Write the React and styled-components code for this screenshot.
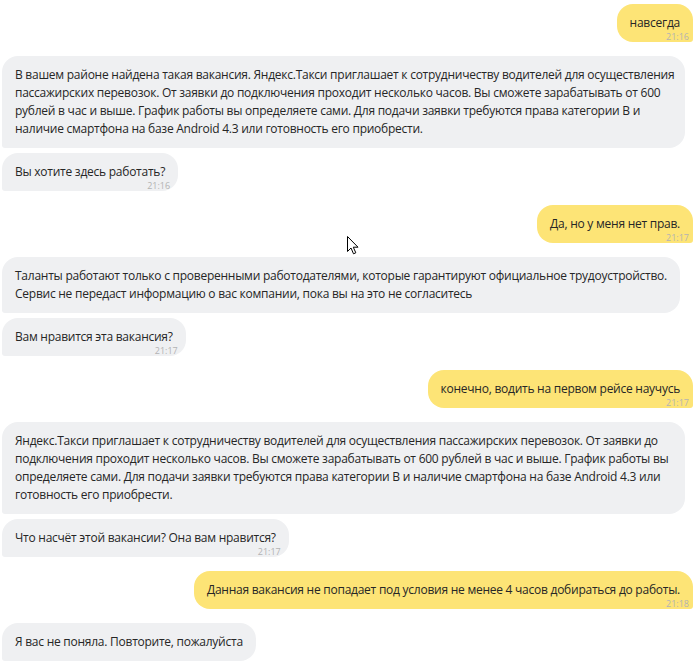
import styled, { createGlobalStyle } from "styled-components";

const GlobalStyle = createGlobalStyle`
  html, body {
    margin: 0;
    padding: 0;
    background: #ffffff;
  }
  body {
    font-family: "Open Sans", "Noto Sans", Arial, sans-serif;
    color: #262626;
  }
`;

const messages = [
  { from: "me", items: [{ text: ["навсегда"], time: "21:16" }] },
  {
    from: "bot",
    items: [
      {
        text: [
          "В вашем районе найдена такая вакансия. Яндекс.Такси приглашает к сотрудничеству водителей для осуществления",
          "пассажирских перевозок. От заявки до подключения проходит несколько часов. Вы сможете зарабатывать от 600",
          "рублей в час и выше. График работы вы определяете сами. Для подачи заявки требуются права категории В и",
          "наличие смартфона на базе Android 4.3 или готовность его приобрести.",
        ],
        wide: true,
      },
      { text: ["Вы хотите здесь работать?"], time: "21:16" },
    ],
  },
  { from: "me", items: [{ text: ["Да, но у меня нет прав."], time: "21:17" }] },
  {
    from: "bot",
    items: [
      {
        text: [
          "Таланты работают только с проверенными работодателями, которые гарантируют официальное трудоустройство.",
          "Сервис не передаст информацию о вас компании, пока вы на это не согласитесь",
        ],
      },
      { text: ["Вам нравится эта вакансия?"], time: "21:17" },
    ],
  },
  { from: "me", items: [{ text: ["конечно, водить на первом рейсе научусь"], time: "21:17" }] },
  {
    from: "bot",
    items: [
      {
        text: [
          "Яндекс.Такси приглашает к сотрудничеству водителей для осуществления пассажирских перевозок. От заявки до",
          "подключения проходит несколько часов. Вы сможете зарабатывать от 600 рублей в час и выше. График работы вы",
          "определяете сами. Для подачи заявки требуются права категории В и наличие смартфона на базе Android 4.3 или",
          "готовность его приобрести.",
        ],
        wide: true,
      },
      { text: ["Что насчёт этой вакансии? Она вам нравится?"], time: "21:17" },
    ],
  },
  {
    from: "me",
    items: [
      { text: ["Данная вакансия не попадает под условия не менее 4 часов добираться до работы."], time: "21:18" },
    ],
  },
  { from: "bot", items: [{ text: ["Я вас не поняла. Повторите, пожалуйста"] }] },
];

const App = () => (
  <>
    <GlobalStyle />
    <Chat>
      {messages.map((group, gi) => (
        <Group key={gi} $mine={group.from === "me"}>
          {group.items.map((msg, mi) => (
            <Bubble key={mi} $mine={group.from === "me"} $wide={msg.wide}>
              {msg.text.map((line, li) => (
                <Line key={li}>{line}</Line>
              ))}
              {msg.time && <Time $mine={group.from === "me"}>{msg.time}</Time>}
            </Bubble>
          ))}
        </Group>
      ))}
      <Cursor width="12" height="19" viewBox="0 0 12 19">
        <path
          d="M0.5 0.5 L0.5 15.5 L4 12 L6.5 17.8 L8.8 16.8 L6.3 11.2 L11 11.2 Z"
          fill="#ffffff"
          stroke="#000000"
          strokeWidth="1"
          strokeLinejoin="miter"
        />
      </Cursor>
    </Chat>
  </>
);

const Chat = styled.div`
  position: relative;
  display: flex;
  flex-direction: column;
  gap: 14px;
  padding: 4px 7px 0 2px;
  width: 700px;
  box-sizing: border-box;
`;

const Group = styled.div`
  display: flex;
  flex-direction: column;
  align-items: ${(p) => (p.$mine ? "flex-end" : "flex-start")};
  gap: 5px;
`;

const Bubble = styled.div`
  position: relative;
  box-sizing: border-box;
  width: ${(p) => (p.$wide ? "683px" : "auto")};
  padding: 10px 13px 10px;
  font-size: 12px;
  letter-spacing: -0.25px;
  line-height: 18px;
  background: ${(p) => (p.$mine ? "#fde476" : "#eff0f2")};
  border-radius: ${(p) => (p.$mine ? "16px 16px 3px 16px" : "16px 16px 16px 3px")};
`;

const Line = styled.div`
  white-space: nowrap;
`;

const Time = styled.span`
  position: absolute;
  right: ${(p) => (p.$mine ? "4px" : "8px")};
  bottom: 0;
  font-size: 9px;
  letter-spacing: 0;
  line-height: 10px;
  color: #b3b3b3;
`;

const Cursor = styled.svg`
  position: absolute;
  left: 347px;
  top: 236px;
`;

export default App;
